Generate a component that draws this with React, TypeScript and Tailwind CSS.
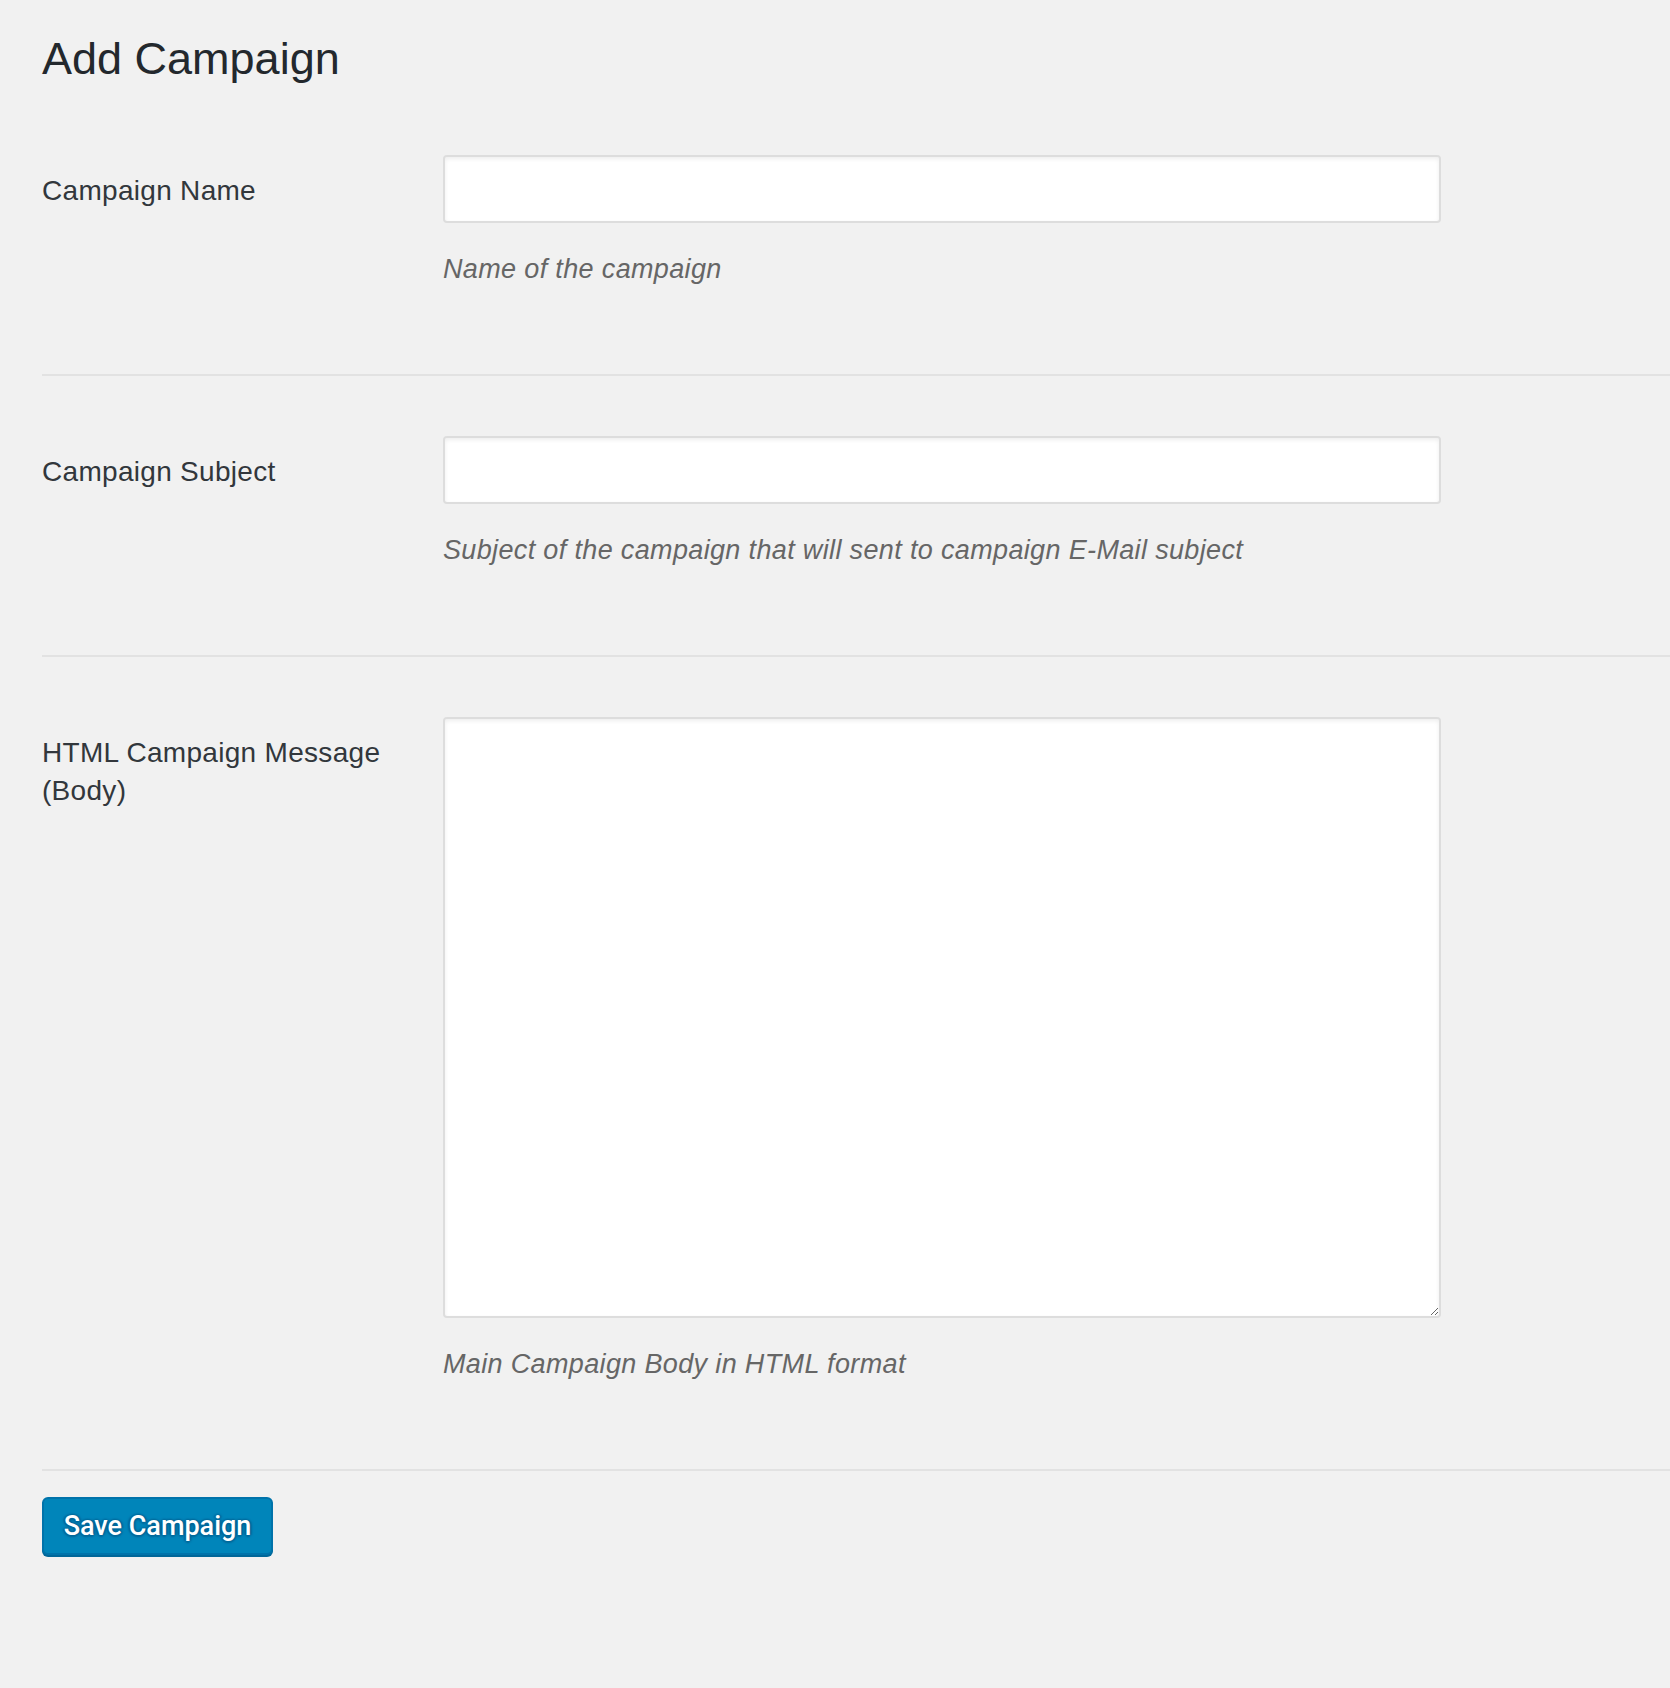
const fields = [
  {
    label: "Campaign Name",
    help: "Name of the campaign",
    kind: "input",
  },
  {
    label: "Campaign Subject",
    help: "Subject of the campaign that will sent to campaign E-Mail subject",
    kind: "input",
  },
  {
    label: "HTML Campaign Message",
    label2: "(Body)",
    help: "Main Campaign Body in HTML format",
    kind: "textarea",
  },
];

export default function App() {
  return (
    <div className="min-h-[1688px] bg-[#f1f1f1] pl-[42px] pt-[30px] font-['Liberation_Sans',Arial,sans-serif] text-[#23282d]">
      <h1 className="mb-[7px] text-[45px] font-normal leading-[58px]">
        Add Campaign
      </h1>

      {fields.map((field) => (
        <div
          key={field.label}
          className="flex border-b-2 border-[#e2e2e2] pb-[87px] pt-[60px]"
        >
          <label className="w-[401px] shrink-0 pt-[17px] text-[28px] leading-[38px] tracking-[0.3px] text-[#32373c]">
            {field.label}
            {field.label2 && (
              <>
                <br />
                {field.label2}
              </>
            )}
          </label>
          <div className="w-[998px]">
            {field.kind === "input" ? (
              <input
                type="text"
                className="block h-[68px] w-full rounded-[4px] border-2 border-[#dddddd] bg-white px-3 text-[28px] shadow-[inset_0_2px_4px_rgba(0,0,0,0.07)] outline-none"
              />
            ) : (
              <textarea className="block h-[601px] w-full rounded-[4px] border-2 border-[#dddddd] bg-white p-3 text-[28px] shadow-[inset_0_2px_4px_rgba(0,0,0,0.07)] outline-none" />
            )}
            <p className="mt-[28px] text-[27px] italic leading-[36px] tracking-[0.35px] text-[#666666]">
              {field.help}
            </p>
          </div>
        </div>
      ))}

      <button
        type="button"
        className="mt-[26px] h-[58px] w-[231px] rounded-[6px] border-2 border-[#0073aa] bg-[#0085ba] font-['Roboto',sans-serif] text-[27px] font-medium text-white shadow-[0_2px_0_#006799] [text-shadow:0_-1px_2px_#006799,2px_0_2px_#006799,0_2px_2px_#006799,-2px_0_2px_#006799]"
      >
        Save Campaign
      </button>
    </div>
  );
}
